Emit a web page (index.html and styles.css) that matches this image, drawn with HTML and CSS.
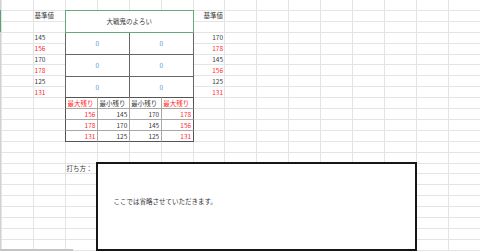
FILE: index.html
```html
<!DOCTYPE html>
<html lang="ja">
<head>
<meta charset="utf-8">
<title>大戦鬼のよろい</title>
<link rel="stylesheet" href="styles.css">
</head>
<body>
<div class="page">
  <div class="rowhead"><span class="sel"></span></div>
  <div class="sheet">
    <div class="cell l y1 x1">基準値</div>
    <div class="cell r y1 x6">基準値</div>

    <div class="cell l y3 x1">145</div>
    <div class="cell l y4 x1 red">156</div>
    <div class="cell l y5 x1">170</div>
    <div class="cell l y6 x1 red">178</div>
    <div class="cell l y7 x1">125</div>
    <div class="cell l y8 x1 red">131</div>

    <div class="cell r y3 x6">170</div>
    <div class="cell r y4 x6 red">178</div>
    <div class="cell r y5 x6">145</div>
    <div class="cell r y6 x6 red">156</div>
    <div class="cell r y7 x6">125</div>
    <div class="cell r y8 x6 red">131</div>

    <div class="cell ctr zb y3 x2 h2 w2 blue">0</div>
    <div class="cell ctr zb y3 x4 h2 w2 blue">0</div>
    <div class="cell ctr zb y5 x2 h2 w2 blue">0</div>
    <div class="cell ctr zb y5 x4 h2 w2 blue">0</div>
    <div class="cell ctr zb y7 x2 h2 w2 blue">0</div>
    <div class="cell ctr zb y7 x4 h2 w2 blue">0</div>

    <div class="cell l nb head first y9 x2 red">最大残り</div>
    <div class="cell l nb head y9 x3">最小残り</div>
    <div class="cell l nb head y9 x4">最小残り</div>
    <div class="cell l nb head last y9 x5 red">最大残り</div>

    <div class="cell r nb first y10 x2 red">156</div>
    <div class="cell r nb y10 x3">145</div>
    <div class="cell r nb y10 x4">170</div>
    <div class="cell r nb last y10 x5 red">178</div>

    <div class="cell r nb first y11 x2 red">178</div>
    <div class="cell r nb y11 x3">170</div>
    <div class="cell r nb y11 x4">145</div>
    <div class="cell r nb last y11 x5 red">156</div>

    <div class="cell r nb first bottom y12 x2 red">131</div>
    <div class="cell r nb bottom y12 x3">125</div>
    <div class="cell r nb bottom y12 x4">125</div>
    <div class="cell r nb last bottom y12 x5 red">131</div>

    <div class="cell ctr title y1 x2 h2 w4">大戦鬼のよろい</div>

    <div class="cell l y15 x2">打ち方：</div>
    <div class="memo y15 x3 h8 w10">
      <p class="memo-text">ここでは省略させていただきます。</p>
    </div>
  </div>
  <div class="hscroll"></div>
</div>
</body>
</html>
```

FILE: styles.css
```css
html, body {
  margin: 0;
  padding: 0;
  height: 251px;
  overflow: hidden;
  background: #fff;
}

body {
  font-family: "Noto Sans CJK JP", "Noto Sans", sans-serif;
  font-size: 6.5px;
  color: #3a3a3a;
}

.page {
  position: relative;
  display: flex;
  height: 251px;
  overflow: hidden;
}

.rowhead {
  flex: 0 0 1.2px;
  display: grid;
  grid-template-rows: repeat(24, 10.9px);
  margin-top: -0.7px;
  background: #d2d2d2;
}

.rowhead .sel {
  grid-row: 2 / span 2;
  background: #5f9f78;
}

.sheet {
  flex: none;
  display: grid;
  grid-template-columns: repeat(16, 31.92px);
  grid-template-rows: repeat(24, 10.9px);
  margin-top: -0.7px;
  background-image:
    repeating-linear-gradient(to right, #e4e4e4 0, #e4e4e4 1px, transparent 1px, transparent 31.92px),
    repeating-linear-gradient(to bottom, #e4e4e4 0, #e4e4e4 1px, transparent 1px, transparent 10.9px);
}

/* placement */
.y1 { grid-row-start: 2; }
.y3 { grid-row-start: 4; }
.y4 { grid-row-start: 5; }
.y5 { grid-row-start: 6; }
.y6 { grid-row-start: 7; }
.y7 { grid-row-start: 8; }
.y8 { grid-row-start: 9; }
.y9 { grid-row-start: 10; }
.y10 { grid-row-start: 11; }
.y11 { grid-row-start: 12; }
.y12 { grid-row-start: 13; }
.y15 { grid-row-start: 16; }

.x1 { grid-column-start: 2; }
.x2 { grid-column-start: 3; }
.x3 { grid-column-start: 4; }
.x4 { grid-column-start: 5; }
.x5 { grid-column-start: 6; }
.x6 { grid-column-start: 7; }

.h2 { grid-row-end: span 2; }
.h8 { grid-row-end: span 8; }
.w2 { grid-column-end: span 2; }
.w4 { grid-column-end: span 4; }
.w10 { grid-column-end: span 10; }

/* cells */
.cell {
  display: flex;
  align-items: center;
  white-space: nowrap;
  padding: 0 1.5px;
  min-width: 0;
  line-height: 1;
}

.l { justify-content: flex-start; }
.r { justify-content: flex-end; }
.ctr { justify-content: center; }

.red { color: #ff2b2b; }
.blue { color: #4d9bd8; }

.zb {
  box-sizing: border-box;
  border: 1px solid #666;
  margin: 0 -1px -1px 0;
  background: #fff;
}

.nb {
  box-sizing: border-box;
  border: 1px solid #a8a8a8;
  margin: 0 -1px -1px 0;
  background: #fff;
}
.nb.head { border-top-color: #555; }
.nb.first { border-left-color: #555; }
.nb.last { border-right-color: #555; }
.nb.bottom { border-bottom-color: #555; }

.title {
  box-sizing: border-box;
  border: 1px solid #67aa80;
  margin: 0 -1px -1px 0;
  background: #fff;
}

.memo {
  box-sizing: border-box;
  border: 2px solid #161616;
  margin: -0.5px -1px -1px -1px;
  background: #fff;
  padding: 32.7px 0 0 15.5px;
}

.memo-text {
  margin: 0;
  line-height: 9px;
  color: #333;
}

.hscroll {
  position: absolute;
  left: 0;
  bottom: 0.5px;
  width: 73px;
  height: 1.2px;
  background: #c4c4c4;
}
```
